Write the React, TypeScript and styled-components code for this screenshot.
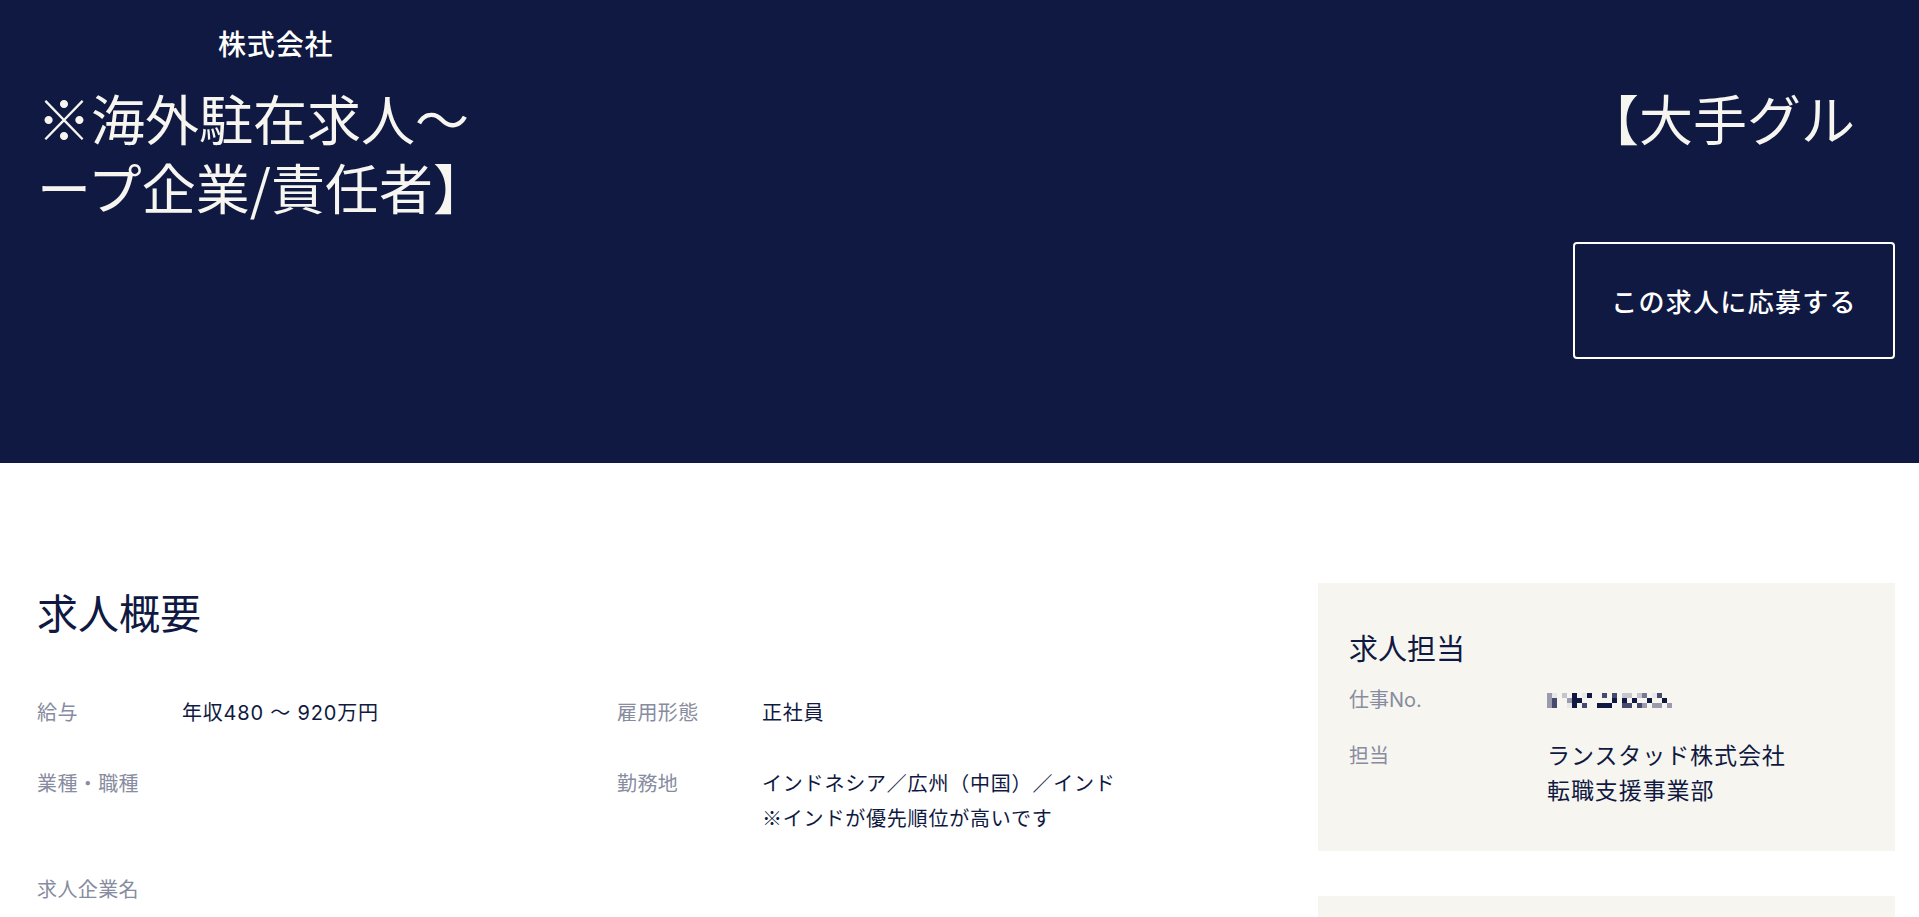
import React from "react";
import styled, { createGlobalStyle } from "styled-components";

const navy = "#0f1941";
const offWhite = "#f7f5f0";
const grey = "#878ca0";

const GlobalStyle = createGlobalStyle`
  html, body {
    margin: 0;
    padding: 0;
    background: #ffffff;
    overflow: hidden;
  }
  body {
    font-family: "Inter", "Noto Sans CJK JP", sans-serif;
    color: ${navy};
    -webkit-font-smoothing: antialiased;
  }
  * { box-sizing: border-box; }
`;

const Page = styled.div`
  width: 100%;
  min-height: 917px;
  display: flex;
  flex-direction: column;
`;

const Hero = styled.header`
  background: ${navy};
  color: ${offWhite};
  height: 463px;
  padding: 24px 24px 0 37px;
  display: flex;
  flex-direction: column;
  font-family: "Noto Sans CJK JP", sans-serif;
`;

const CompanyName = styled.div<{ $indent: number }>`
  font-size: 28px;
  line-height: 39px;
  font-weight: 500;
  letter-spacing: 0.03em;
  padding-left: ${(p) => p.$indent}px;
  color: #ffffff;
`;

const Title = styled.h1`
  margin: 20px 0 0;
  padding-right: 40px;
  font-size: 54px;
  line-height: 69px;
  font-weight: 400;
  display: flex;
  flex-direction: column;
`;

const TitleLine = styled.span<{ $spread?: boolean }>`
  display: flex;
  justify-content: ${(p) => (p.$spread ? "space-between" : "flex-start")};
  white-space: nowrap;
`;

const ActionRow = styled.div`
  display: flex;
  justify-content: flex-end;
  margin-top: 21px;
`;

const ApplyButton = styled.button`
  width: 322px;
  height: 117px;
  border: 2px solid #ffffff;
  border-radius: 4px;
  background: transparent;
  color: #ffffff;
  font-family: "Noto Sans CJK JP", sans-serif;
  font-size: 26px;
  font-weight: 500;
  letter-spacing: 0.05em;
  cursor: pointer;
  padding: 0;
`;

const Main = styled.main`
  display: flex;
  padding: 120px 24px 0 37px;
  gap: 40px;
`;

const Overview = styled.section`
  flex: 1;
  min-width: 0;
`;

const SectionTitle = styled.h2`
  margin: 0;
  font-family: "Noto Sans CJK JP", sans-serif;
  font-size: 41px;
  line-height: 56px;
  font-weight: 400;
  color: ${navy};
`;

const InfoGrid = styled.dl`
  margin: 58px 0 0;
  display: grid;
  grid-template-columns: 145px 435px 145px 1fr;
  row-gap: 38px;
  align-items: start;
`;

const Label = styled.dt`
  margin: 0;
  font-size: 20px;
  line-height: 33px;
  letter-spacing: 0.02em;
  color: ${grey};
  white-space: nowrap;
`;

const Value = styled.dd`
  margin: 0;
  font-size: 20px;
  line-height: 33px;
  letter-spacing: 0.04em;
  color: ${navy};
  min-height: 33px;
`;

const Mark = styled.span`
  font-family: "Noto Sans CJK JP", sans-serif;
`;

const Aside = styled.aside`
  width: 577px;
  flex-shrink: 0;
  display: flex;
  flex-direction: column;
  gap: 45px;
`;

const Panel = styled.div<{ $tall?: boolean }>`
  background: ${offWhite};
  padding: 45px 31px 43px;
  min-height: ${(p) => (p.$tall ? "200px" : "0")};
`;

const PanelTitle = styled.h3`
  margin: 0;
  font-family: "Noto Sans CJK JP", sans-serif;
  font-size: 29px;
  line-height: 39px;
  font-weight: 400;
  color: ${navy};
`;

const PanelList = styled.dl`
  margin: 16px 0 0;
  display: grid;
  grid-template-columns: 198px 1fr;
  row-gap: 22px;
`;

const PanelLabel = styled.dt`
  margin: 0;
  font-size: 20px;
  line-height: 34px;
  color: ${grey};
`;

const PanelValue = styled.dd`
  margin: 0;
  font-size: 23px;
  line-height: 34.5px;
  letter-spacing: 0.04em;
  color: ${navy};
  display: flex;
  flex-direction: column;
`;

const MosaicWrap = styled.span`
  display: flex;
  align-items: center;
  height: 34px;
`;

type Cell = [number, number, string];
const N = "#0f1941";
const M = "#454a6e";
const G = "#9a9cab";
const L = "#c4c5ce";
const V = "#e9e8e8";

const cells: Cell[] = [
  [0, 0, G], [1, 0, V], [3, 0, L], [5, 0, N], [7, 0, V], [8, 0, N], [11, 0, M], [13, 0, M],
  [15, 0, L], [16, 0, L], [18, 0, L], [19, 0, "#777a90"], [21, 0, V], [22, 0, M],
  [0, 1, G], [1, 1, M], [4, 1, G], [5, 1, N], [6, 1, N], [13, 1, N], [15, 1, N], [17, 1, N],
  [20, 1, N], [23, 1, N],
  [0, 2, G], [1, 2, M], [4, 2, V], [5, 2, N], [7, 2, M], [10, 2, N], [11, 2, N], [12, 2, N],
  [15, 2, M], [16, 2, M], [18, 2, M], [19, 2, G], [21, 2, G], [22, 2, G], [24, 2, G],
];

const Mosaic: React.FC = () => (
  <MosaicWrap>
    <svg width="125" height="15" viewBox="0 0 125 15" aria-label="redacted">
      {cells.map(([c, r, color], i) => (
        <rect key={i} x={c * 5} y={r * 5} width="5" height="5" fill={color} />
      ))}
    </svg>
  </MosaicWrap>
);

export default function App() {
  return (
    <>
      <GlobalStyle />
      <Page>
        <Hero>
          <CompanyName $indent={181}>株式会社</CompanyName>
          <Title>
            <TitleLine $spread>
              <span>※海外駐在求人～</span>
              <span>【大手グル</span>
            </TitleLine>
            <TitleLine>ープ企業/責任者】</TitleLine>
          </Title>
          <ActionRow>
            <ApplyButton>この求人に応募する</ApplyButton>
          </ActionRow>
        </Hero>
        <Main>
          <Overview>
            <SectionTitle>求人概要</SectionTitle>
            <InfoGrid>
              <Label>給与</Label>
              <Value>年収480 ～ 920万円</Value>
              <Label>雇用形態</Label>
              <Value>正社員</Value>

              <Label>業種・職種</Label>
              <Value />
              <Label>勤務地</Label>
              <Value>
                インドネシア／広州（中国）／インド
                <br />
                <Mark>※</Mark>インドが優先順位が高いです
              </Value>

              <Label>求人企業名</Label>
              <Value />
            </InfoGrid>
          </Overview>
          <Aside>
            <Panel>
              <PanelTitle>求人担当</PanelTitle>
              <PanelList>
                <PanelLabel>仕事No.</PanelLabel>
                <PanelValue>
                  <Mosaic />
                </PanelValue>
                <PanelLabel>担当</PanelLabel>
                <PanelValue>
                  <span>ランスタッド株式会社</span>
                  <span>転職支援事業部</span>
                </PanelValue>
              </PanelList>
            </Panel>
            <Panel $tall />
          </Aside>
        </Main>
      </Page>
    </>
  );
}
